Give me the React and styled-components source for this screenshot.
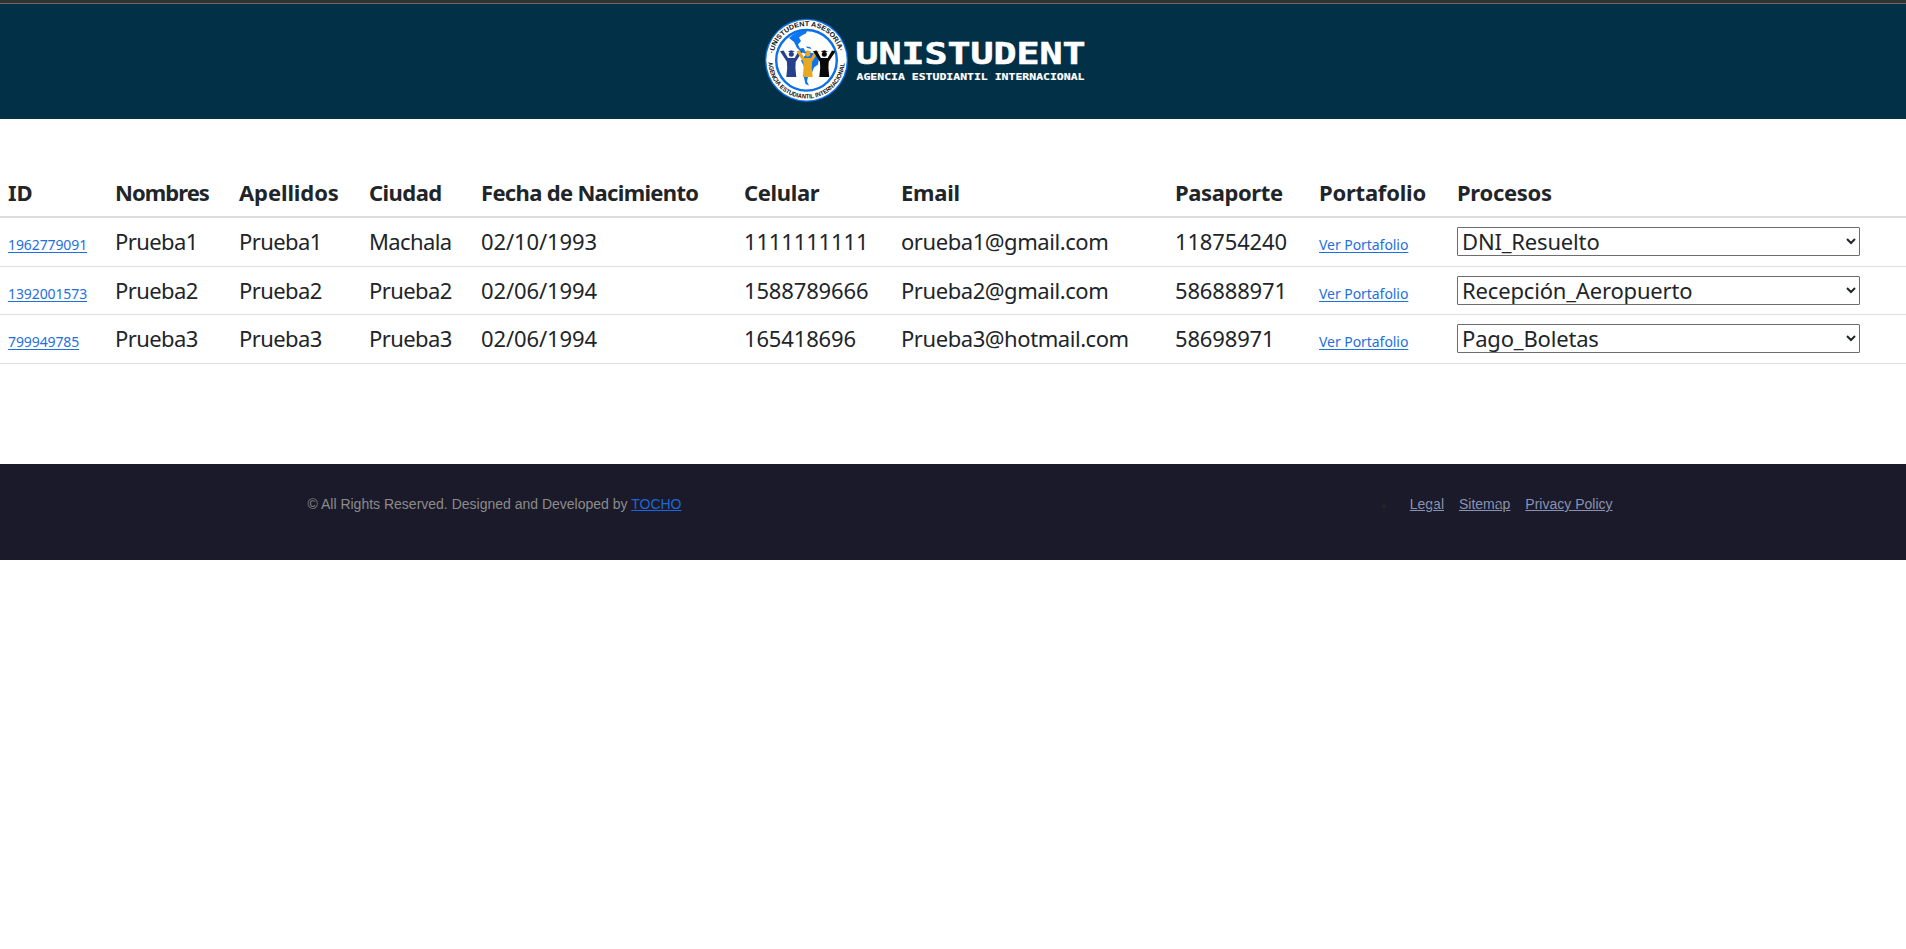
import React from "react";
import styled, { createGlobalStyle } from "styled-components";

const GlobalStyle = createGlobalStyle`
  *, *::before, *::after { box-sizing: border-box; }
  body {
    margin: 0;
    background: #fff;
    color: #212529;
    font-family: "Noto Sans", "Open Sans", sans-serif;
    font-size: 22px;
    line-height: 31px;
  }
`;

const Header = styled.header`
  height: 119px;
  border-top: 3px solid #333;
  background: #023047;
  box-shadow: inset 0 1px 0 #6b6b66;
  display: flex;
  justify-content: center;
  padding: 12px 56px 0 0;
`;

const LogoSvg = styled.svg`
  display: block;
  width: 324px;
  height: 90px;
`;

const Main = styled.main`
  padding: 50px 0 100px;
`;

const Table = styled.table`
  width: 100%;
  table-layout: fixed;
  border-collapse: separate;
  border-spacing: 0;
`;

const Column = styled.col`
  width: ${(p) => p.$width}px;
`;

const HeadCell = styled.th`
  height: 49px;
  padding: 8px;
  border-bottom: 2px solid #dcdcdd;
  text-align: left;
  font-weight: 700;
  white-space: nowrap;
  letter-spacing: ${(p) => p.$track || 0}px;
`;

const Row = styled.tr`
  height: ${(p) => p.$height}px;
`;

const Cell = styled.td`
  padding: 8px 8px 7px;
  border-bottom: 1px solid #dcdfe2;
  vertical-align: top;
  white-space: nowrap;
  letter-spacing: ${(p) => p.$track || 0}px;
`;

const CellLink = styled.a`
  color: #1f6fe0;
  font-size: 14px;
  line-height: 1;
  letter-spacing: ${(p) => p.$track || 0}px;
  text-decoration: underline;
  text-underline-offset: 2px;
`;

const SelectBox = styled.div`
  position: relative;
  width: 403px;
  margin-top: 1px;
`;

const Select = styled.select`
  appearance: none;
  display: block;
  width: 100%;
  height: 29px;
  margin: 0;
  padding: 0 20px 0 4px;
  border: 1px solid #6c6c6c;
  border-radius: 1px;
  background: #fff;
  color: #212529;
  font: inherit;
  line-height: 27px;
  letter-spacing: -0.17px;
`;

const Chevron = styled.svg`
  position: absolute;
  right: 4px;
  top: 10px;
  width: 10px;
  height: 8px;
  pointer-events: none;
`;

const Footer = styled.footer`
  height: 96px;
  padding: 29px 293.5px 0 307.5px;
  background: #1b1a2a;
  display: flex;
  justify-content: space-between;
  font-family: "Liberation Sans", Arial, sans-serif;
  font-size: 14px;
  line-height: 23px;
`;

const Copyright = styled.p`
  margin: 0;
  color: #8b8b8b;
`;

const FooterLink = styled.a`
  color: ${(p) => (p.$accent ? "#1f66d8" : "#8a92b2")};
  text-decoration: underline;
`;

const LinkList = styled.ul`
  display: flex;
  gap: 15px;
  margin: 0;
  padding: 0;
  list-style: none;
`;

const LinkItem = styled.li`
  position: relative;
  &::before {
    content: "";
    position: absolute;
    left: -28px;
    top: 11px;
    width: 4px;
    height: 4px;
    border-radius: 50%;
    background: #212529;
  }
`;

const columns = [
  ["ID", 107, 0],
  ["Nombres", 124, -0.95],
  ["Apellidos", 130, -0.1],
  ["Ciudad", 112, -0.55],
  ["Fecha de Nacimiento", 263, -0.68],
  ["Celular", 157, -0.35],
  ["Email", 274, -0.25],
  ["Pasaporte", 144, -0.4],
  ["Portafolio", 138, -0.22],
  ["Procesos", 457, -0.3],
];

const cellTracks = [-0.6, -0.6, -0.6, -0.12, -0.15, -0.44, -0.15];

const rows = [
  { id: "1962779091", height: 49, values: ["Prueba1", "Prueba1", "Machala", "02/10/1993", "1111111111", "orueba1@gmail.com", "118754240"], process: "DNI_Resuelto" },
  { id: "1392001573", height: 48, values: ["Prueba2", "Prueba2", "Prueba2", "02/06/1994", "1588789666", "Prueba2@gmail.com", "586888971"], process: "Recepción_Aeropuerto" },
  { id: "799949785", height: 49, values: ["Prueba3", "Prueba3", "Prueba3", "02/06/1994", "165418696", "Prueba3@hotmail.com", "58698971"], process: "Pago_Boletas" },
];

const Graduate = ({ x, color }) => (
  <g transform={`translate(${x} 0)`} fill={color}>
    <circle cx="0" cy="39.3" r="2.5" />
    <path d="M-3.6 36.4 0 35.2l3.6 1.2L0 37.6z" />
    <path d="M-11.3 36.2l3.6-.8 4.4 7.6h6.6l4.4-7.6 3.6.8-6.9 10.6-.3 6.2.9 9h-10l.9-9-.3-6.2z" />
  </g>
);

const Logo = () => (
  <LogoSvg viewBox="0 0 324 90" role="img" aria-label="Unistudent">
    <defs>
      <path id="arcTop" d="M10.3 39.5A33.6 33.6 0 0 1 76.7 39.5" />
      <path id="arcBottom" d="M5.2 45.3A38.3 38.3 0 0 0 81.8 45.3" />
    </defs>
    <circle cx="43.5" cy="45.3" r="41.6" fill="#0b6fe8" />
    <circle cx="43.5" cy="45.3" r="40.2" fill="#fff" />
    <circle cx="43.5" cy="45.3" r="30.3" fill="#fff" stroke="#0b6fe8" strokeWidth="2.4" />
    <g fill="#0b76f0">
      <path d="M26 23Q34 15 44 15.4l-1 3-3.5 1.5-3.5 2.6 2 3.5-3 3.5 2 4 3.5-.5 2 3.5 4.5 1.5-2 1.5-6-2-5-4.5-3-6z" />
      <path d="M43 31.5l4 .6 1.6 1.8-4.5-.8z" />
      <path d="M45 37l6 1.5 5 5-1 6-4 3-2 5-4 4-1 5 2 4-3.5-1.5-1.8-7.5 1.3-8-4-8z" />
    </g>
    <Graduate x={28.3} color="#26408c" />
    <Graduate x={44.7} color="#e9a820" />
    <Graduate x={61.3} color="#090909" />
    <g fill="#111" fontFamily="Liberation Sans, sans-serif" fontWeight="700">
      <text fontSize="6.8"><textPath href="#arcTop" startOffset="1" textLength="91" lengthAdjust="spacingAndGlyphs">·UNISTUDENT ASESORÍA·</textPath></text>
      <text fontSize="6.2"><textPath href="#arcBottom" startOffset="2" textLength="115" lengthAdjust="spacingAndGlyphs">AGENCIA ESTUDIANTIL INTERNACIONAL</textPath></text>
    </g>
    <g fill="#fff" stroke="#fff" fontFamily="DejaVu Sans Mono, monospace" fontWeight="700">
      <text x="92.5" y="48.8" fontSize="30.6" strokeWidth="0.6" textLength="230" lengthAdjust="spacingAndGlyphs">UNISTUDENT</text>
      <text x="93.5" y="65" fontSize="8.8" strokeWidth="0.15" textLength="228" lengthAdjust="spacingAndGlyphs">AGENCIA ESTUDIANTIL INTERNACIONAL</text>
    </g>
  </LogoSvg>
);

export default function App() {
  return (
    <>
      <GlobalStyle />
      <Header>
        <Logo />
      </Header>
      <Main>
        <Table>
          <colgroup>
            {columns.map(([label, width]) => <Column key={label} $width={width} />)}
          </colgroup>
          <thead>
            <tr>
              {columns.map(([label, , track]) => (
                <HeadCell key={label} $track={track}>{label}</HeadCell>
              ))}
            </tr>
          </thead>
          <tbody>
            {rows.map((row) => (
              <Row key={row.id} $height={row.height}>
                <Cell><CellLink href="#" $track={-0.1}>{row.id}</CellLink></Cell>
                {row.values.map((value, i) => (
                  <Cell key={i} $track={cellTracks[i]}>{value}</Cell>
                ))}
                <Cell><CellLink href="#" $track={-0.05}>Ver Portafolio</CellLink></Cell>
                <Cell>
                  <SelectBox>
                    <Select defaultValue={row.process}>
                      <option>{row.process}</option>
                    </Select>
                    <Chevron viewBox="0 0 10 8" aria-hidden="true">
                      <path d="M1 2l4 4 4-4" fill="none" stroke="#212529" strokeWidth="2" />
                    </Chevron>
                  </SelectBox>
                </Cell>
              </Row>
            ))}
          </tbody>
        </Table>
      </Main>
      <Footer>
        <Copyright>
          © All Rights Reserved. Designed and Developed by <FooterLink href="#" $accent>TOCHO</FooterLink>
        </Copyright>
        <LinkList>
          {["Legal", "Sitemap", "Privacy Policy"].map((label) => (
            <LinkItem key={label}><FooterLink href="#">{label}</FooterLink></LinkItem>
          ))}
        </LinkList>
      </Footer>
    </>
  );
}
